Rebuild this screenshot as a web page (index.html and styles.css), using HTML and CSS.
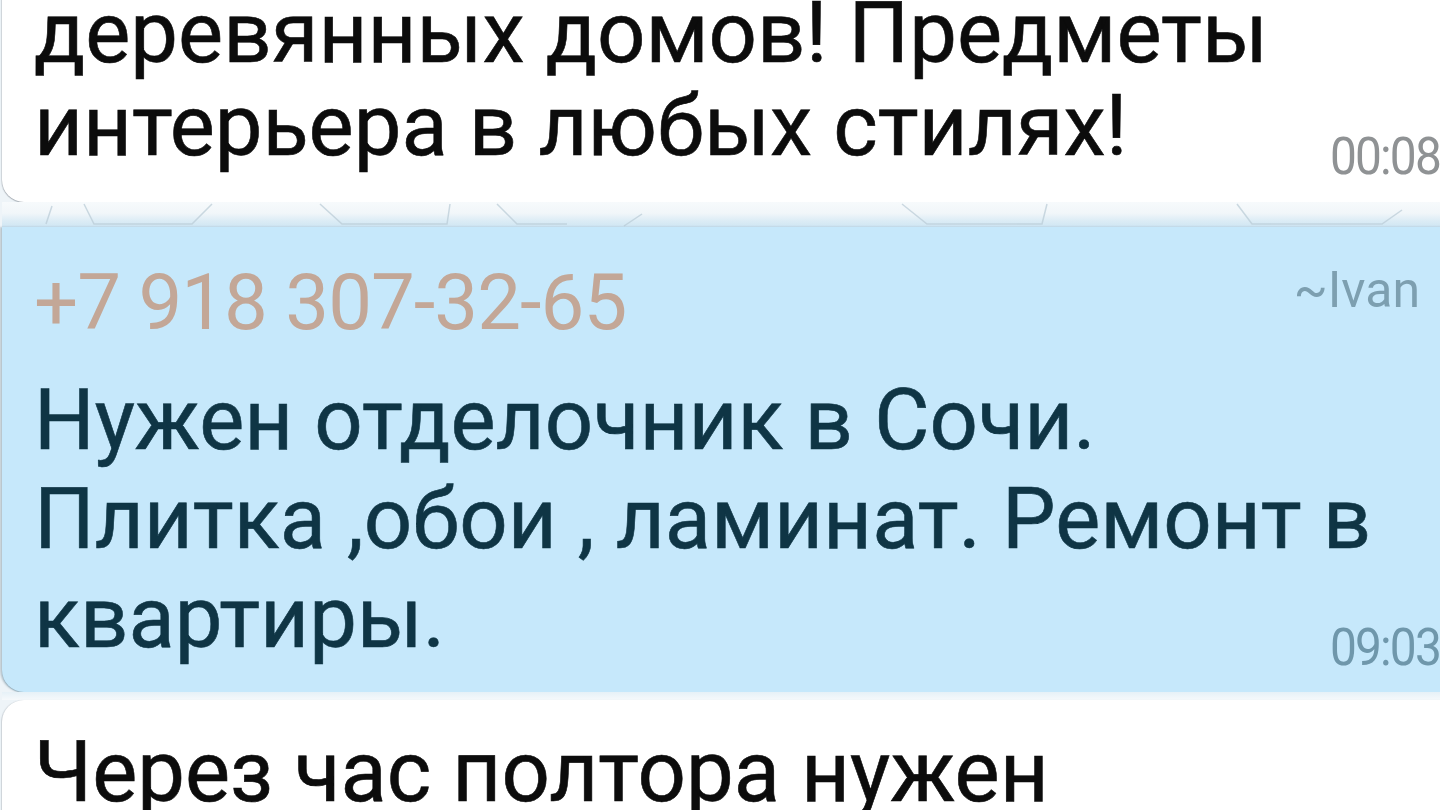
FILE: index.html
```html
<!DOCTYPE html>
<html lang="ru">
<head>
<meta charset="utf-8">
<title>Чат</title>
<link rel="stylesheet" href="styles.css">
</head>
<body>
<main class="chat">
  <div class="bubble bubble-in bubble-first">
    <p class="msg-text msg-text-tight">деревянных домов! Предметы<br>интерьера в любых стилях!</p>
    <span class="msg-time time-grey time-first">00:08</span>
  </div>

  <div class="gap gap-top">
    <svg class="doodle" width="1440" height="25" viewBox="0 0 1440 25" aria-hidden="true">
      <g fill="none" stroke="#b9cbd6" stroke-width="1.5" opacity="0.7">
        <path d="M50 4 L44 22"/>
        <path d="M82 2 L92 22 L190 22 L210 2"/>
        <path d="M318 2 L340 22 L445 22 L448 2"/>
        <path d="M495 2 L515 22 L565 22"/>
        <path d="M640 12 L622 24"/>
        <path d="M900 2 L925 22 L1040 22 L1045 2"/>
        <path d="M1235 2 L1250 22 L1380 22 L1400 8"/>
      </g>
    </svg>
  </div>

  <div class="bubble bubble-group">
    <div class="sender-row">
      <span class="sender-phone">+7 918 307-32-65</span>
      <span class="sender-name">~Ivan</span>
    </div>
    <div class="msg-body">
      <p class="msg-text msg-text-blue">Нужен отделочник в Сочи.<br>Плитка ,обои , ламинат. Ремонт в<br>квартиры.</p>
      <span class="msg-time time-blue time-second">09:03</span>
    </div>
  </div>

  <div class="gap gap-bottom"></div>

  <div class="bubble bubble-in bubble-last">
    <p class="msg-text">Через час полтора нужен</p>
  </div>
</main>
</body>
</html>
```
FILE: styles.css
```css
html, body {
  margin: 0;
  padding: 0;
  height: 100%;
  overflow: hidden;
}

body {
  background: #eef4f8;
  font-family: Roboto, "Noto Sans", "Liberation Sans", sans-serif;
}

.chat {
  width: 1478px;
  display: flex;
  flex-direction: column;
  padding-left: 2px;
}

.bubble {
  border-radius: 0 0 0 22px;
  box-sizing: border-box;
  padding-left: 32px;
  padding-right: 10px;
}

.bubble-in {
  background: #ffffff;
  box-shadow: 0 1px 1px rgba(60, 70, 80, 0.35), -1px 0 1px rgba(60, 70, 80, 0.15);
}

.bubble-first {
  display: flex;
  align-items: flex-end;
  margin-top: -13px;
  padding-bottom: 29px;
}

.msg-text {
  margin: 0;
  font-size: 85px;
  line-height: 99px;
  color: #0c0c0c;
  white-space: nowrap;
  flex: 1;
  min-width: 0;
  -webkit-text-stroke: 0.6px currentColor;
}

.msg-text-tight {
  line-height: 93px;
}

.msg-time {
  font-size: 52px;
  line-height: 60px;
  letter-spacing: -2px;
  width: 140px;
  flex: none;
  transform: scaleX(0.92);
  transform-origin: left bottom;
}

.time-grey {
  color: #8f9294;
}

.time-blue {
  color: #6f97ab;
}

.time-first {
  margin-bottom: -14px;
}

.time-second {
  margin-bottom: -10px;
}

.gap {
  flex: none;
}

.gap-top {
  height: 25px;
  background:
    linear-gradient(180deg, #f7fafc 0%, #f1f6f9 45%, #dcecf5 75%, #cfe6f3 100%);
}

.doodle {
  display: block;
}

.gap-bottom {
  height: 8px;
  background: linear-gradient(180deg, #e6f1f7 0%, #f6f9fb 100%);
}

.bubble-group {
  background: #c6e8fb;
  padding-top: 32px;
  padding-bottom: 24px;
  box-shadow: 0 1px 1px rgba(90, 130, 150, 0.45), -2px 0 2px rgba(40, 70, 90, 0.25);
}

.sender-row {
  display: flex;
  align-items: flex-start;
  justify-content: space-between;
  padding-right: 50px;
}

.sender-phone {
  font-size: 78px;
  line-height: 88px;
  color: #c3a797;
  letter-spacing: -1px;
}

.sender-name {
  font-size: 50px;
  line-height: 58px;
  color: #7d9fb0;
  margin-top: 2px;
}

.msg-body {
  display: flex;
  align-items: flex-end;
  margin-top: 24px;
}

.msg-text-blue {
  color: #0f3545;
}

.bubble-last {
  border-radius: 22px 0 0 0;
  padding-top: 23px;
  height: 200px;
}
```
